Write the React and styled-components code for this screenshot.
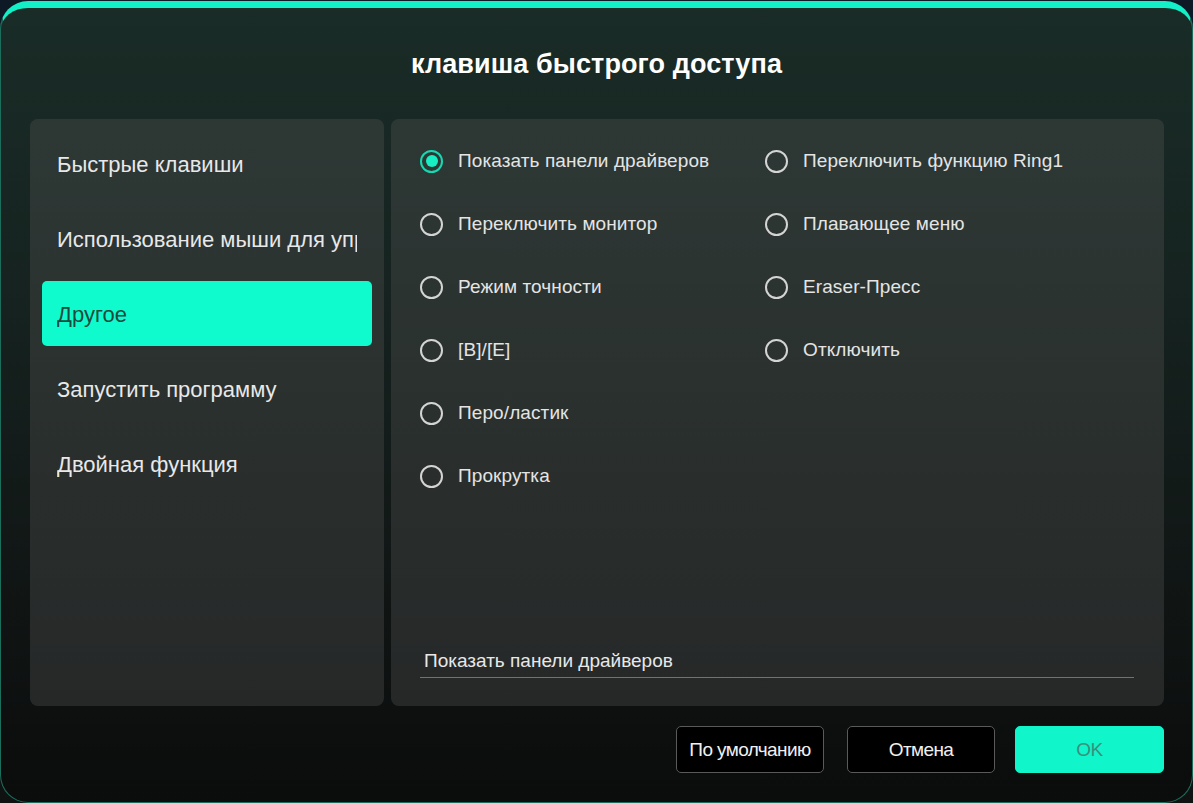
import React from "react";
import styled, { createGlobalStyle } from "styled-components";

const GlobalStyle = createGlobalStyle`
  html, body {
    margin: 0;
    padding: 0;
    background: linear-gradient(#0d1a26, #101212);
    font-family: "Liberation Sans", Arial, sans-serif;
  }
`;

const Dialog = styled.div`
  box-sizing: border-box;
  width: 1193px;
  height: 802px;
  margin-top: 1px;
  border: 1px solid #1c6e5c;
  border-top: 7px solid #13efc6;
  border-radius: 28px;
  background: linear-gradient(180deg, #1a2c27 0%, #162320 35%, #101514 75%, #0b0c0c 100%);
  display: flex;
  flex-direction: column;
  overflow: hidden;
`;

const Header = styled.div`
  height: 111px;
  display: flex;
  align-items: center;
  justify-content: center;
  padding-top: 2px;
  box-sizing: border-box;
`;

const Title = styled.h1`
  margin: 0;
  font-size: 27px;
  letter-spacing: 0.1px;
  font-weight: bold;
  color: #ffffff;
`;

const Body = styled.div`
  display: flex;
  gap: 7px;
  padding: 0 28px 0 29px;
  height: 587px;
`;

const Panel = styled.div`
  box-sizing: border-box;
  border-radius: 8px;
  background: linear-gradient(180deg, #2d3835 0%, #2a302e 50%, #262828 100%);
`;

const SidePanel = styled(Panel)`
  width: 354px;
  padding: 12px;
  display: flex;
  flex-direction: column;
  gap: 10px;
`;

const MenuItem = styled.div`
  height: 65px;
  display: flex;
  align-items: center;
  padding: 2px 15px 0;
  box-sizing: border-box;
  border-radius: 5px;
  font-size: 22px;
  color: ${(p) => (p.$active ? "#1d4a40" : "#e8e8e8")};
  background: ${(p) => (p.$active ? "#10fbcd" : "transparent")};
`;

const MenuLabel = styled.span`
  display: block;
  overflow: hidden;
  white-space: nowrap;
`;

const MainPanel = styled(Panel)`
  flex: 1;
  display: flex;
  flex-direction: column;
  padding: 22px 30px 28px 29px;
`;

const RadioGrid = styled.div`
  display: grid;
  grid-template-columns: 345px 1fr;
  grid-auto-flow: column;
  grid-template-rows: repeat(6, 40px);
  row-gap: 23px;
`;

const RadioRow = styled.label`
  display: flex;
  align-items: center;
  gap: 15px;
  font-size: 19px;
  letter-spacing: 0.1px;
  color: #e4e4e4;
  white-space: nowrap;
`;

const RadioMark = styled.span`
  box-sizing: border-box;
  width: 23px;
  height: 23px;
  border-radius: 50%;
  border: 2px solid ${(p) => (p.$checked ? "#15d9b2" : "#d4d4d4")};
  display: flex;
  align-items: center;
  justify-content: center;
  flex-shrink: 0;
  &::after {
    content: "";
    display: ${(p) => (p.$checked ? "block" : "none")};
    width: 12px;
    height: 12px;
    border-radius: 50%;
    background: #17eec4;
  }
`;

const Spacer = styled.div`
  flex: 1;
`;

const Field = styled.div`
  height: 34px;
  box-sizing: border-box;
  padding-left: 4px;
  display: flex;
  align-items: center;
  border-bottom: 1px solid #727272;
  font-size: 19px;
  color: #e8e8e8;
`;

const Footer = styled.div`
  display: flex;
  justify-content: flex-end;
  gap: 20px;
  padding: 20px 28px 0 0;
`;

const Button = styled.button`
  width: ${(p) => (p.$primary ? "149px" : "148px")};
  height: 47px;
  border-radius: 5px;
  border: 1px solid ${(p) => (p.$primary ? "#10f5c9" : "#5a5a5a")};
  background: ${(p) => (p.$primary ? "#10f5c9" : "#000000")};
  color: ${(p) => (p.$primary ? "#3b8f7c" : "#f0f0f0")};
  font-family: "Liberation Sans", Arial, sans-serif;
  font-size: 19px;
  letter-spacing: -0.6px;
  padding: 0;
  &:first-child {
    margin-right: 3px;
  }
`;

const menu = [
  "Быстрые клавиши",
  "Использование мыши для управления",
  "Другое",
  "Запустить программу",
  "Двойная функция",
];

const options = [
  "Показать панели драйверов",
  "Переключить монитор",
  "Режим точности",
  "[B]/[E]",
  "Перо/ластик",
  "Прокрутка",
  "Переключить функцию Ring1",
  "Плавающее меню",
  "Eraser-Пресс",
  "Отключить",
];

export default function App() {
  return (
    <>
      <GlobalStyle />
      <Dialog>
        <Header>
          <Title>клавиша быстрого доступа</Title>
        </Header>
        <Body>
          <SidePanel>
            {menu.map((m, i) => (
              <MenuItem key={m} $active={i === 2}>
                <MenuLabel>{m}</MenuLabel>
              </MenuItem>
            ))}
          </SidePanel>
          <MainPanel>
            <RadioGrid>
              {options.map((o, i) => (
                <RadioRow key={o}>
                  <RadioMark $checked={i === 0} />
                  <span>{o}</span>
                </RadioRow>
              ))}
            </RadioGrid>
            <Spacer />
            <Field>Показать панели драйверов</Field>
          </MainPanel>
        </Body>
        <Footer>
          <Button>По умолчанию</Button>
          <Button>Отмена</Button>
          <Button $primary>OK</Button>
        </Footer>
      </Dialog>
    </>
  );
}
